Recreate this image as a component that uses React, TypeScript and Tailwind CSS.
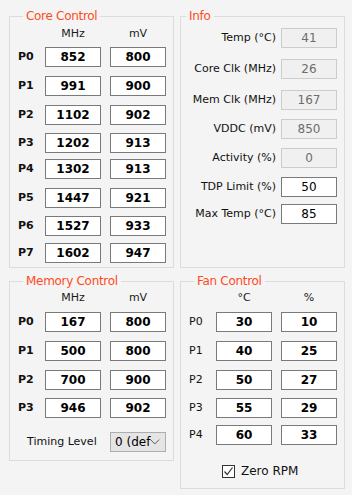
import type { ReactNode } from 'react'

const font = { fontFamily: '"DejaVu Sans", Verdana, sans-serif' }

interface Row {
  name: string
  a: string
  b: string
  gap: string
}

const coreRows: Row[] = [
  { name: 'P0', a: '852', b: '800', gap: 'mt-[7px]' },
  { name: 'P1', a: '991', b: '900', gap: 'mt-[9px]' },
  { name: 'P2', a: '1102', b: '902', gap: 'mt-[9px]' },
  { name: 'P3', a: '1202', b: '913', gap: 'mt-[8px]' },
  { name: 'P4', a: '1302', b: '913', gap: 'mt-[6px]' },
  { name: 'P5', a: '1447', b: '921', gap: 'mt-[9px]' },
  { name: 'P6', a: '1527', b: '933', gap: 'mt-[8px]' },
  { name: 'P7', a: '1602', b: '947', gap: 'mt-[7px]' },
]

const memRows: Row[] = [
  { name: 'P0', a: '167', b: '800', gap: 'mt-[8px]' },
  { name: 'P1', a: '500', b: '800', gap: 'mt-[9px]' },
  { name: 'P2', a: '700', b: '900', gap: 'mt-[9px]' },
  { name: 'P3', a: '946', b: '902', gap: 'mt-[8px]' },
]

const fanRows: Row[] = [
  { name: 'P0', a: '30', b: '10', gap: 'mt-[8px]' },
  { name: 'P1', a: '40', b: '25', gap: 'mt-[9px]' },
  { name: 'P2', a: '50', b: '27', gap: 'mt-[9px]' },
  { name: 'P3', a: '55', b: '29', gap: 'mt-[8px]' },
  { name: 'P4', a: '60', b: '33', gap: 'mt-[7px]' },
]

const infoRows = [
  { label: 'Temp (°C)', value: '41', off: true, gap: 'mt-[5px]' },
  { label: 'Core Clk (MHz)', value: '26', off: true, gap: 'mt-[11px]' },
  { label: 'Mem Clk (MHz)', value: '167', off: true, gap: 'mt-[11px]' },
  { label: 'VDDC (mV)', value: '850', off: true, gap: 'mt-[9px]' },
  { label: 'Activity (%)', value: '0', off: true, gap: 'mt-[9px]' },
  { label: 'TDP Limit (%)', value: '50', off: false, gap: 'mt-[9px]' },
  { label: 'Max Temp (°C)', value: '85', off: false, gap: 'mt-[7px]' },
]

function Group({ title, className, children }: { title: string; className: string; children: ReactNode }) {
  return (
    <fieldset className={`border border-[#dcdcdc] ${className}`}>
      <legend className="ml-[5px] px-[3px] text-[12px] leading-[14px] tracking-[-0.3px] text-[#ff4a1c]">{title}</legend>
      {children}
    </fieldset>
  )
}

function Box({ value, bold = true }: { value: string; bold?: boolean }) {
  return (
    <div
      className={`flex h-[20px] w-[56px] items-center justify-center border border-[#7a7a7a] bg-white text-[12px] text-black ${
        bold ? 'font-bold' : ''
      }`}
    >
      {value}
    </div>
  )
}

function Header({ a, b, pad }: { a: string; b: string; pad: string }) {
  return (
    <div className={`flex h-[13px] items-center text-[11px] leading-[13px] text-[#1a1a1a] ${pad}`}>
      <div className="w-[27px]" />
      <div className="w-[56px] text-center">{a}</div>
      <div className="ml-[9px] w-[56px] text-center">{b}</div>
    </div>
  )
}

function Rows({ rows, bold }: { rows: Row[]; bold: boolean }) {
  return (
    <>
      {rows.map(r => (
        <div key={r.name} className={`flex items-center ${r.gap}`}>
          <div className={`w-[27px] text-[11px] text-[#111] ${bold ? 'font-bold' : ''}`}>{r.name}</div>
          <Box value={r.a} />
          <div className="ml-[9px]">
            <Box value={r.b} />
          </div>
        </div>
      ))}
    </>
  )
}

export default function App() {
  return (
    <div className="h-[495px] w-[352px] bg-[#f4f4f4] pl-[9px] pt-[9px]" style={font}>
      <div className="grid grid-cols-[165px_165px] items-start gap-x-[6px] gap-y-[6px]">
        <Group title="Core Control" className="h-[259px] pl-[8px]">
          <Header a="MHz" b="mV" pad="mt-[4px]" />
          <Rows rows={coreRows} bold />
        </Group>

        <Group title="Info" className="h-[259px] pr-[7px]">
          {infoRows.map(r => (
            <div key={r.label} className={`flex items-center justify-end gap-[5px] ${r.gap}`}>
              <span className="text-[11px] text-[#111]">{r.label}</span>
              {r.off ? (
                <div className="flex h-[20px] w-[56px] items-center justify-center border border-[#cccccc] bg-[#f0f0f0] text-[12px] text-[#6d6d6d]">
                  {r.value}
                </div>
              ) : (
                <Box value={r.value} bold={false} />
              )}
            </div>
          ))}
        </Group>

        <Group title="Memory Control" className="h-[187px] pl-[8px]">
          <Header a="MHz" b="mV" pad="mt-[3px]" />
          <Rows rows={memRows} bold />
          <div className="mt-[14px] flex items-center">
            <div className="w-[92px] pl-[9px] text-[11px] text-[#111]">Timing Level</div>
            <div className="flex h-[20px] w-[56px] items-center justify-between border border-[#adadad] bg-[#e5e5e5] pl-[4px] pr-[5px] text-[12px] text-black">
              <span className="whitespace-nowrap">0 (def</span>
              <svg width="10" height="6" viewBox="0 0 10 6" fill="none" stroke="#555" strokeWidth="1">
                <path d="M0.5 0.5 L5 5 L9.5 0.5" />
              </svg>
            </div>
          </div>
        </Group>

        <Group title="Fan Control" className="h-[215px] pl-[8px]">
          <Header a="°C" b="%" pad="mt-[3px]" />
          <Rows rows={fanRows} bold={false} />
          <div className="mt-[17px] flex items-center pl-[33px]">
            <div className="flex h-[13px] w-[13px] items-center justify-center border border-[#333] bg-white">
              <svg width="11" height="11" viewBox="0 0 11 11" fill="none" stroke="#333" strokeWidth="1.2">
                <path d="M1.5 5.5 L4.2 8.5 L9.5 1.5" />
              </svg>
            </div>
            <span className="ml-[6px] text-[12px] text-[#111]">Zero RPM</span>
          </div>
        </Group>
      </div>
    </div>
  )
}
